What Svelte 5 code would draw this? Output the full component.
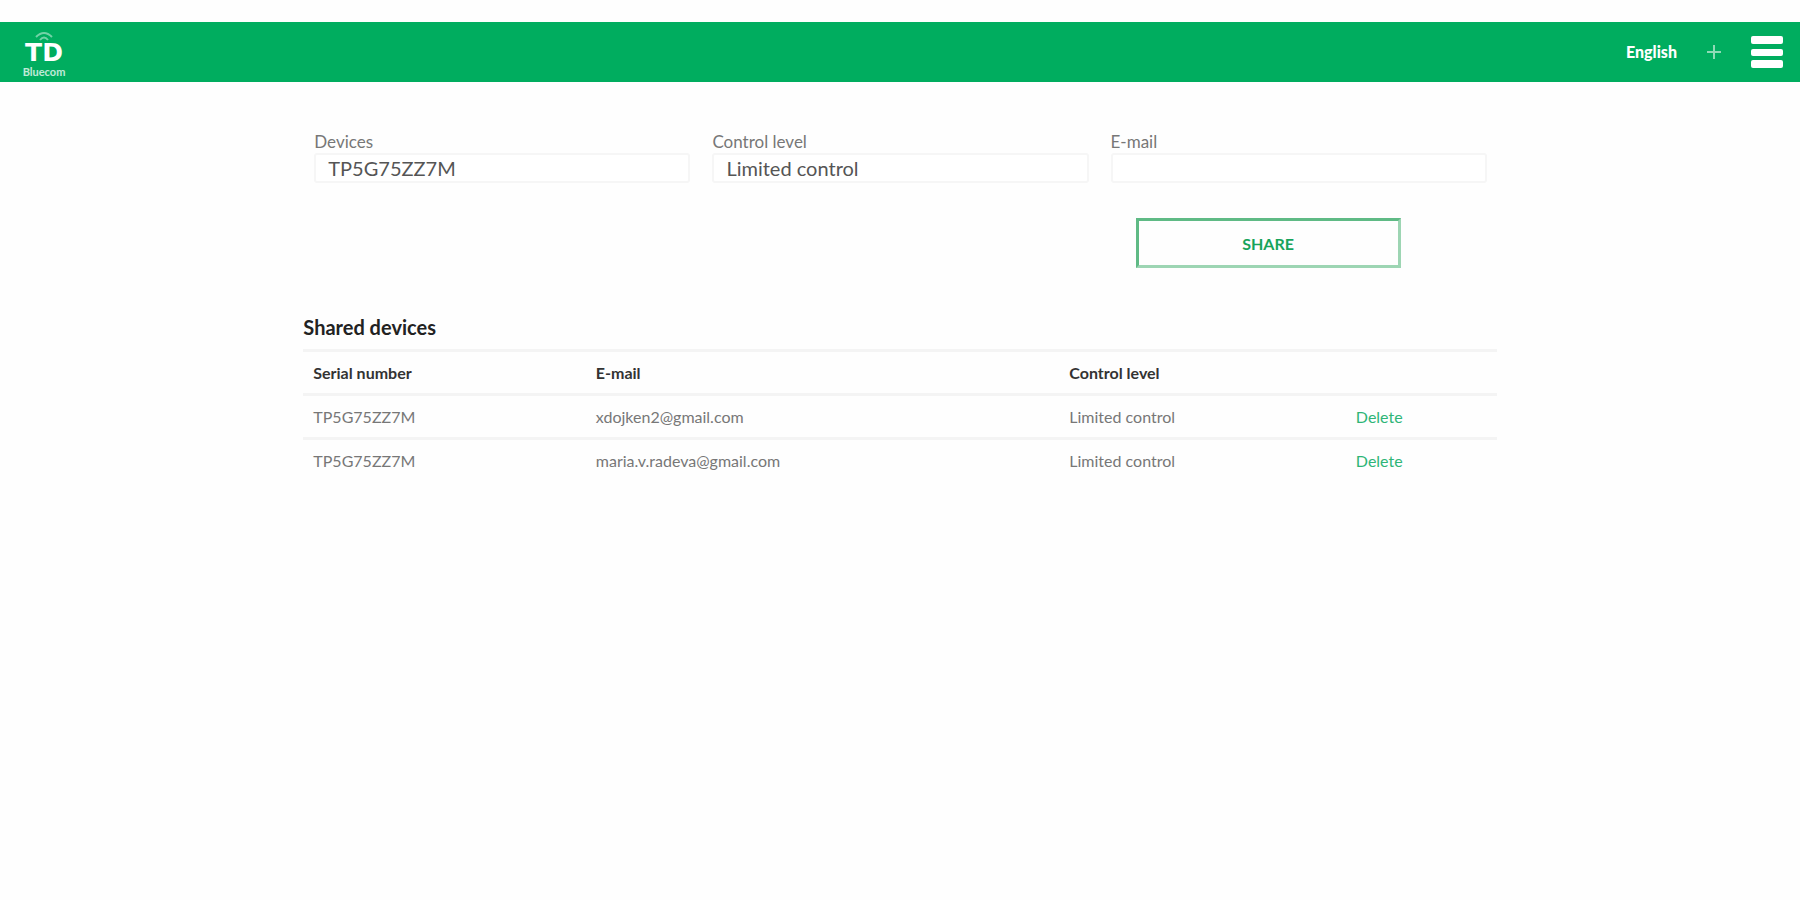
<script>
  const languages = ['English'];
  const deviceOptions = ['TP5G75ZZ7M'];
  const levels = ['Limited control'];

  let device = $state('TP5G75ZZ7M');
  let level = $state('Limited control');
  let email = $state('');
  let shared = $state([
    { serial: 'TP5G75ZZ7M', email: 'xdojken2@gmail.com', level: 'Limited control' },
    { serial: 'TP5G75ZZ7M', email: 'maria.v.radeva@gmail.com', level: 'Limited control' }
  ]);

  function share(event) {
    event.preventDefault();
    if (!email) return;
    shared.push({ serial: device, email, level });
    email = '';
  }

  function remove(index) {
    shared.splice(index, 1);
  }
</script>

<header>
  <a class="logo" href="#home">
    <svg viewBox="0 0 44 16" class="signal" aria-hidden="true">
      <path d="M14 10 Q22 2 30 10" />
      <path d="M18 13 Q22 8 26 13" />
    </svg>
    <span class="brand">TD</span>
    <span class="tagline">Bluecom</span>
  </a>
  <nav>
    <select class="language" aria-label="Language">
      {#each languages as language}
        <option>{language}</option>
      {/each}
    </select>
    <button class="icon" type="button" aria-label="Add">
      <svg class="plus" viewBox="0 0 16 16"><path d="M8 1V15M1 8H15" /></svg>
    </button>
    <button class="icon" type="button" aria-label="Menu">
      <svg class="bars" viewBox="0 0 32 34">
        <rect y="1" width="32" height="8" rx="2" />
        <rect y="14" width="32" height="7" rx="2" />
        <rect y="25" width="32" height="8" rx="2" />
      </svg>
    </button>
  </nav>
</header>

<main>
  <form onsubmit={share}>
    <div class="field">
      <label for="device">Devices</label>
      <select id="device" bind:value={device}>
        {#each deviceOptions as option}
          <option>{option}</option>
        {/each}
      </select>
    </div>
    <div class="field">
      <label for="level">Control level</label>
      <select id="level" bind:value={level}>
        {#each levels as option}
          <option>{option}</option>
        {/each}
      </select>
    </div>
    <div class="field">
      <label for="email">E-mail</label>
      <input id="email" type="email" bind:value={email} />
    </div>
    <button class="share" type="submit">SHARE</button>
  </form>

  <h1>Shared devices</h1>
  <table>
    <thead>
      <tr>
        <th class="serial">Serial number</th>
        <th class="mail">E-mail</th>
        <th class="control">Control level</th>
        <td></td>
      </tr>
    </thead>
    <tbody>
      {#each shared as row, i}
        <tr>
          <td>{row.serial}</td>
          <td>{row.email}</td>
          <td>{row.level}</td>
          <td><button class="delete" type="button" onclick={() => remove(i)}>Delete</button></td>
        </tr>
      {/each}
    </tbody>
  </table>
</main>

<style>
  :global(body) {
    margin: 0;
    background: #fefefe;
    color: #333;
    font-family: Lato, 'Noto Sans', sans-serif;
    font-size: 16px;
  }
  button,
  input,
  select {
    box-sizing: border-box;
    margin: 0;
    padding: 0;
    border: 0;
    background: transparent;
    color: inherit;
    font: inherit;
    appearance: none;
  }
  button {
    cursor: pointer;
  }
  header {
    display: flex;
    align-items: center;
    justify-content: space-between;
    box-sizing: border-box;
    height: 60px;
    margin-top: 22px;
    padding: 0 17px 0 22px;
    background: #00ad5f;
    color: #fff;
  }
  .logo {
    display: flex;
    flex-direction: column;
    align-items: center;
    width: 44px;
    color: #fff;
    text-decoration: none;
  }
  .signal {
    width: 44px;
    height: 16px;
    margin-bottom: -4px;
    opacity: 0.45;
  }
  .signal path {
    fill: none;
    stroke: #fff;
    stroke-width: 2;
  }
  .brand {
    font: bold 25px/28px 'DejaVu Sans', sans-serif;
  }
  .tagline {
    font-size: 11px;
    font-weight: 700;
    line-height: 10px;
    opacity: 0.75;
  }
  nav {
    display: flex;
    align-items: center;
    gap: 29px;
  }
  .language {
    font-weight: 900;
    line-height: 24px;
  }
  .icon {
    display: flex;
  }
  .plus {
    width: 16px;
    height: 16px;
    fill: none;
    stroke: #8fdab6;
    stroke-width: 2;
  }
  .bars {
    width: 32px;
    height: 34px;
    fill: #fff;
  }
  main {
    width: 66.3%;
    margin: 0 auto;
  }
  form {
    display: grid;
    grid-template-columns: repeat(3, 1fr);
    column-gap: 22px;
    row-gap: 35px;
    padding: 49px 10px 0 11px;
  }
  .field {
    display: flex;
    flex-direction: column;
  }
  label {
    color: #777;
    font-size: 17px;
    line-height: 22px;
  }
  .field select,
  .field input {
    width: 100%;
    height: 30px;
    padding: 0 12px;
    border: 2px solid #f6f6f6;
    border-radius: 3px;
    background: #fff;
    color: #555;
    font-size: 20px;
    line-height: 26px;
  }
  .share {
    grid-column: 3;
    width: 265px;
    height: 50px;
    margin-left: 25px;
    border: 3px solid #5fba85;
    border-right-color: #9dd5b3;
    border-bottom-color: #9dd5b3;
    color: #17a45b;
    font-weight: 700;
  }
  h1 {
    margin: 45px 0 8px;
    color: #222;
    font-size: 20px;
    font-weight: 700;
    line-height: 28px;
  }
  table {
    width: 100%;
    border-collapse: collapse;
    table-layout: fixed;
  }
  th,
  td {
    padding: 0 10px;
    height: 41px;
    border-top: 3px solid #f4f4f4;
    text-align: left;
    color: #777;
  }
  th {
    color: #333;
    font-weight: 700;
  }
  .serial {
    width: 22%;
  }
  .mail {
    width: 38%;
  }
  .control {
    width: 22%;
  }
  td:last-child {
    padding-left: 14px;
  }
  .delete {
    color: #2eb577;
  }
</style>
